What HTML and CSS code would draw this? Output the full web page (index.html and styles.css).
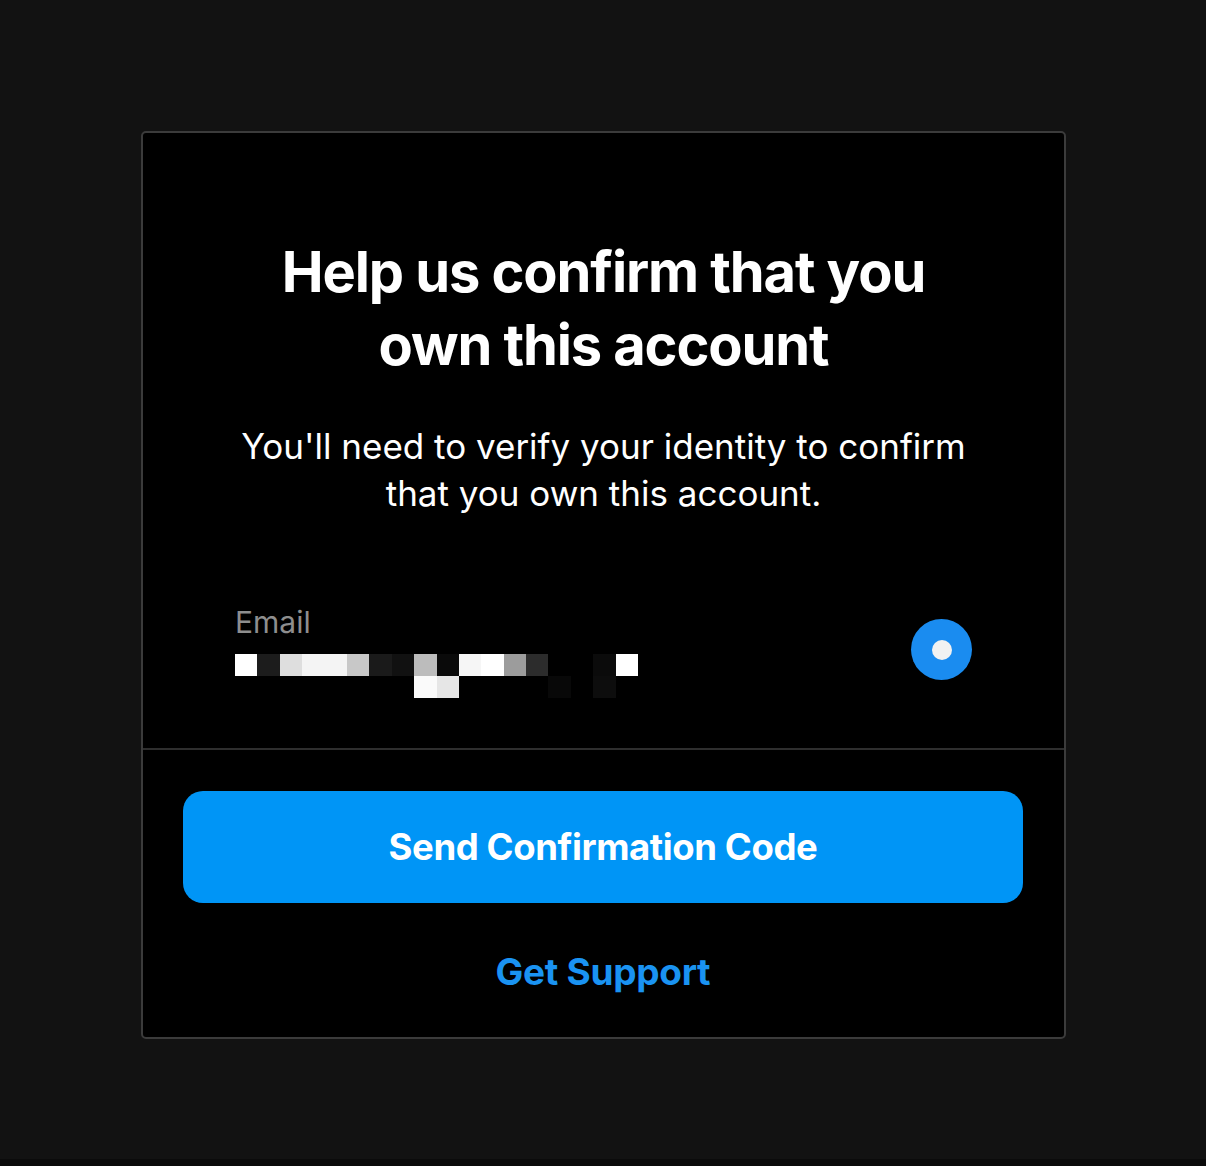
FILE: index.html
```html
<!DOCTYPE html>
<html lang="en">
<head>
    <meta charset="UTF-8">
    <title>Confirm your account</title>
    <link rel="stylesheet" href="styles.css">
</head>
<body>

<div class="page">
    <div class="card">
        <div class="card-top">
            <h1>Help us confirm that you own this account</h1>
            <p class="lead">You'll need to verify your identity to confirm that you own this account.</p>

            <label class="option">
                <div class="option-text">
                    <div class="option-label">Email</div>
                    <!-- censored address -->
                    <div class="blur">
                        <div class="blur-row">
                            <span style="background:#fff"></span>
                            <span style="background:#1c1c1c"></span>
                            <span style="background:#dedede"></span>
                            <span style="background:#f4f4f4"></span>
                            <span style="background:#f4f4f4"></span>
                            <span style="background:#c8c8c8"></span>
                            <span style="background:#1a1a1a"></span>
                            <span style="background:#111"></span>
                            <span style="background:#bcbcbc"></span>
                            <span style="background:#0a0a0a"></span>
                            <span style="background:#f6f6f6"></span>
                            <span style="background:#fff"></span>
                            <span style="background:#9c9c9c"></span>
                            <span style="background:#2c2c2c"></span>
                            <span style="background:#000"></span>
                            <span style="background:#000"></span>
                            <span style="background:#0b0b0b"></span>
                            <span style="background:#fff"></span>
                        </div>
                        <div class="blur-row">
                            <span></span><span></span><span></span><span></span>
                            <span></span><span></span><span></span><span></span>
                            <span style="background:#fafafa"></span>
                            <span style="background:#e6e6e6"></span>
                            <span></span><span></span><span></span><span></span>
                            <span style="background:#080808"></span>
                            <span></span>
                            <span style="background:#0d0d0d"></span>
                        </div>
                    </div>
                </div>
                <span class="radio"><span class="radio-dot"></span></span>
            </label>
        </div>

        <div class="card-bottom">
            <button class="btn-primary">Send Confirmation Code</button>
            <a class="link" href="#">Get Support</a>
        </div>
    </div>

    <div class="page-edge"></div>
</div>

</body>
</html>
```

FILE: styles.css
```css
html, body { margin: 0; padding: 0; }
body { background: #121212; color: #fff; font-family: Inter, 'Noto Sans', sans-serif; }

.page      { min-height: 100vh; display: flex; flex-direction: column; align-items: center; padding-top: 131px; box-sizing: border-box; }
.page-edge { margin-top: auto; align-self: stretch; height: 7px; background: #0b0b0b; }

.card       { width: 925px; margin-left: 1px; box-sizing: border-box; background: #000; border: 2px solid #3b3b3b; border-radius: 5px; }
.card-top   { padding: 103px 92px 50px 92px; border-bottom: 2px solid #2e2e2e; text-align: center; }
.card-bottom { padding: 41px 41px 43px 40px; display: flex; flex-direction: column; align-items: center; }

h1    { margin: 0 auto; max-width: 700px; font-size: 56px; line-height: 73px; font-weight: 700; letter-spacing: -1.1px; }
.lead { margin: 41px auto 0; max-width: 740px; font-size: 35px; line-height: 47px; font-weight: 400; }

.option       { margin-top: 86px; display: flex; align-items: center; justify-content: space-between; text-align: left; }
.option-label { font-size: 30px; line-height: 34px; color: #8e8e8e; margin-bottom: 15px; margin-top: 2px; }

.blur       { display: flex; flex-direction: column; }
.blur-row   { display: flex; }
.blur-row span { width: 22.4px; height: 22px; }

.radio     { width: 61px; height: 61px; border-radius: 50%; background: #1a8cf0; display: flex; align-items: center; justify-content: center; margin-top: -2px; }
.radio-dot { width: 20px; height: 20px; border-radius: 50%; background: #f2f2f2; }

.btn-primary { width: 100%; height: 112px; border: 0; border-radius: 20px; background: #0095f6; color: #fff; font-family: inherit; font-size: 36.5px; font-weight: 700; letter-spacing: -0.4px; cursor: pointer; }
.link        { margin-top: 47px; font-size: 37px; line-height: 44px; font-weight: 700; color: #1a93f2; text-decoration: none; letter-spacing: -0.3px; }
```
